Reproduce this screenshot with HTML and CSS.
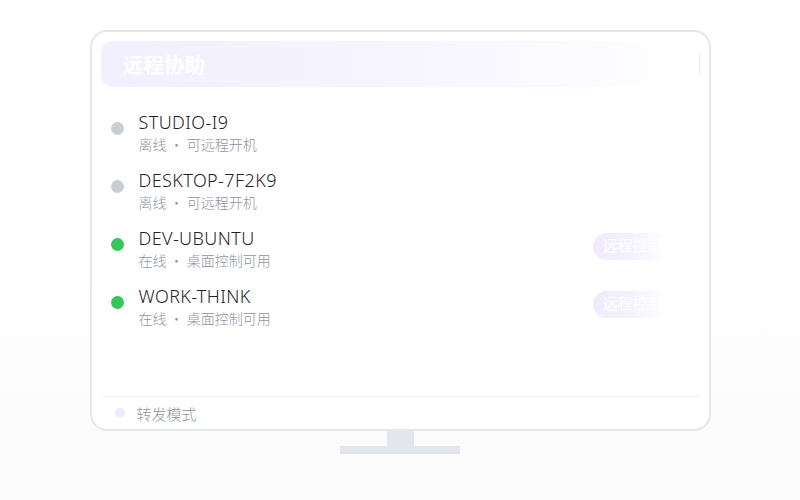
FILE: index.html
```html
<!DOCTYPE html>
<html lang="zh-CN">
<head>
<meta charset="utf-8">
<title>远程协助</title>
<link rel="stylesheet" href="styles.css">
</head>
<body>
<div class="stage">
  <div class="monitor">
    <div class="header"><span class="title">远程协助</span></div>
    <ul class="list">
      <li class="row">
        <span class="dot off"></span>
        <div class="info"><div class="name">STUDIO-I9</div><div class="sub">离线 · 可远程开机</div></div>
      </li>
      <li class="row">
        <span class="dot off"></span>
        <div class="info"><div class="name">DESKTOP-7F2K9</div><div class="sub">离线 · 可远程开机</div></div>
      </li>
      <li class="row">
        <span class="dot on"></span>
        <div class="info"><div class="name">DEV-UBUNTU</div><div class="sub">在线 · 桌面控制可用</div></div>
        <span class="btn">远程控制</span>
      </li>
      <li class="row">
        <span class="dot on"></span>
        <div class="info"><div class="name">WORK-THINK</div><div class="sub">在线 · 桌面控制可用</div></div>
        <span class="btn">远程控制</span>
      </li>
    </ul>
    <div class="spacer"></div>
    <div class="divider"></div>
    <div class="footer"><span class="fdot"></span><span class="ftext">转发模式</span></div>
  </div>
  <div class="neck"></div>
  <div class="base"></div>
</div>
</body>
</html>
```
FILE: styles.css
```css
html, body {
  margin: 0;
  padding: 0;
}
body {
  width: 800px;
  height: 500px;
  background: linear-gradient(180deg, #ffffff 0%, #ffffff 48%, #fbfbfc 100%);
  font-family: "Noto Sans", "Noto Sans CJK SC", sans-serif;
  overflow: hidden;
}
.stage {
  display: flex;
  flex-direction: column;
  align-items: center;
  padding-top: 30px;
}
.monitor {
  box-sizing: border-box;
  width: 621px;
  height: 401px;
  border: 2px solid #e4e7eb;
  border-radius: 17px;
  background: #ffffff;
  padding: 9px 9px 0 9px;
  display: flex;
  flex-direction: column;
}
.header {
  position: relative;
  height: 46px;
  border-radius: 12px;
  background: linear-gradient(90deg, #f2effe 0%, #f6f4ff 45%, rgba(255,255,255,0) 100%);
  display: flex;
  align-items: center;
  padding-left: 22px;
}
.header::after {
  content: "";
  position: absolute;
  right: 0;
  top: 12px;
  width: 1px;
  height: 22px;
  background: #eceef2;
}
.title {
  color: #ffffff;
  font-family: "Noto Sans CJK SC", sans-serif;
  font-size: 20.5px;
  font-weight: 700;
  letter-spacing: 0.2px;
}
.list {
  list-style: none;
  margin: 12px 0 0 0;
  padding: 0;
}
.row {
  height: 58px;
  display: flex;
  align-items: center;
  padding-left: 10px;
}
.dot {
  width: 13px;
  height: 13px;
  border-radius: 50%;
  flex: none;
  margin-right: 15px;
}
.dot.off { background: #c9cdd4; }
.dot.on { background: #34c759; }
.info {
  flex: 1;
  margin-top: 8px;
}
.name {
  font-size: 18px;
  font-weight: 300;
  line-height: 24px;
  color: #1f2329;
  letter-spacing: 0.4px;
}
.sub {
  font-family: "Noto Sans CJK SC", sans-serif;
  font-size: 14px;
  font-weight: 300;
  line-height: 20px;
  color: #8f959e;
}
.btn {
  width: 75px;
  height: 27px;
  box-sizing: border-box;
  margin-right: 32px;
  margin-top: 5px;
  border-radius: 14px;
  background: linear-gradient(90deg, #efebfd 0%, #f4f1fe 50%, rgba(255,255,255,0) 100%);
  color: #ffffff;
  font-family: "Liberation Serif", "Noto Sans CJK SC", serif;
  font-size: 15px;
  line-height: 27px;
  padding-left: 10px;
  white-space: nowrap;
  overflow: hidden;
}
.spacer {
  flex: 1;
}
.divider {
  height: 1px;
  background: #eef0f3;
  margin: 0 1px;
}
.footer {
  height: 32px;
  display: flex;
  align-items: center;
  padding-left: 14px;
}
.fdot {
  width: 10px;
  height: 10px;
  border-radius: 50%;
  background: #efebfd;
  margin-right: 12px;
}
.ftext {
  font-family: "Noto Sans CJK SC", sans-serif;
  font-size: 15px;
  font-weight: 300;
  color: #8f959e;
}
.neck {
  width: 27px;
  height: 15px;
  background: #e3e6ea;
}
.base {
  width: 120px;
  height: 8px;
  background: #e3e6ea;
}
```
